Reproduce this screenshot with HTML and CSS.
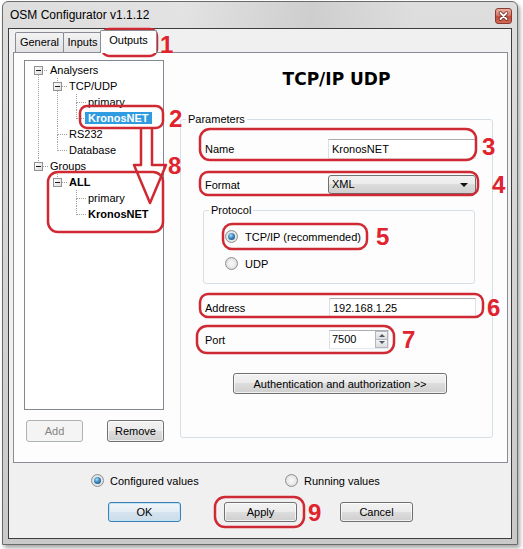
FILE: index.html
```html
<!DOCTYPE html>
<html>
<head>
	<meta charset="utf-8">
	<title>OSM Configurator v1.1.12</title>
	<link rel="stylesheet" href="styles.css">
</head>

<body>
	<div class="window">
		<div class="titlebar">
			<span class="title">OSM Configurator v1.1.12</span>
			<span class="close">
				<svg width="15" height="14" viewBox="0 0 15 14">
					<path d="M4.5 4L10.5 10M10.5 4L4.5 10" stroke="#6a2a22" stroke-width="3.4" stroke-linecap="round"/>
					<path d="M4.5 4L10.5 10M10.5 4L4.5 10" stroke="#fff" stroke-width="1.8" stroke-linecap="round"/>
				</svg>
			</span>
		</div>

		<div class="client">
			<div class="tabs">
				<div class="tab general">General</div>
				<div class="tab inputs">Inputs</div>
				<div class="tab active">Outputs</div>
			</div>

			<div class="panel">
				<div class="left">
					<ul class="tree">
						<li>
							<span class="node"><i class="toggle"></i>Analysers</span>
							<ul>
								<li>
									<span class="node"><i class="toggle"></i>TCP/UDP</span>
									<ul>
										<li><span class="node">primary</span></li>
										<li><span class="node"><b class="current">KronosNET</b></span></li>
									</ul>
								</li>
								<li><span class="node">RS232</span></li>
								<li><span class="node">Database</span></li>
							</ul>
						</li>
						<li>
							<span class="node"><i class="toggle"></i>Groups</span>
							<ul>
								<li>
									<span class="node"><i class="toggle"></i><b>ALL</b></span>
									<ul>
										<li><span class="node">primary</span></li>
										<li><span class="node"><b>KronosNET</b></span></li>
									</ul>
								</li>
							</ul>
						</li>
					</ul>
					<div class="tree-buttons">
						<button class="btn add" disabled>Add</button>
						<button class="btn remove">Remove</button>
					</div>
				</div>

				<div class="right">
					<h2>TCP/IP UDP</h2>
					<fieldset class="group params">
						<legend>Parameters</legend>
						<div class="rows">
							<div class="row">
								<span class="caption">Name</span>
								<div class="textbox">KronosNET</div>
							</div>
							<div class="row format">
								<span class="caption">Format</span>
								<div class="combo">XML<i class="arrow"></i></div>
							</div>
							<fieldset class="group protocol">
								<legend>Protocol</legend>
								<div class="radio-line"><span class="radio checked"></span>TCP/IP (recommended)</div>
								<div class="radio-line udp"><span class="radio"></span>UDP</div>
							</fieldset>
							<div class="row address">
								<span class="caption">Address</span>
								<div class="textbox">192.168.1.25</div>
							</div>
							<div class="row port">
								<span class="caption">Port</span>
								<div class="spin">
									<span class="spin-value">7500</span>
									<span class="spin-btns"><i class="up"></i><i class="down"></i></span>
								</div>
							</div>
							<button class="btn auth">Authentication and authorization &gt;&gt;</button>
						</div>
					</fieldset>
				</div>
			</div>

			<div class="mode">
				<label class="mode-item"><span class="radio checked"></span>Configured values</label>
				<label class="mode-item"><span class="radio"></span>Running values</label>
			</div>

			<div class="actions">
				<button class="btn default">OK</button>
				<button class="btn">Apply</button>
				<button class="btn">Cancel</button>
			</div>
		</div>
	</div>

	<!-- red hints drawn over the screenshot -->
	<svg class="marks" width="523" height="549" viewBox="0 0 523 549">
		<g fill="none" stroke="#cf2a33" stroke-width="2.5" stroke-linejoin="round">
			<rect x="102" y="29" width="55" height="27" rx="7"/>
			<rect x="80" y="106" width="83" height="22" rx="7"/>
			<rect x="48" y="172" width="115" height="60" rx="10"/>
			<path d="M141 129V165H134L150 203L166 165H152V129"/>
			<rect x="200" y="129" width="276" height="31" rx="10"/>
			<rect x="200" y="172" width="278" height="23" rx="8"/>
			<rect x="223" y="224" width="144" height="25" rx="9"/>
			<rect x="200" y="294" width="283" height="23" rx="8"/>
			<rect x="197" y="326" width="197" height="27" rx="10"/>
			<rect x="215" y="497" width="89" height="30" rx="10"/>
		</g>
		<g class="num">
			<text x="160" y="53">1</text>
			<text x="169" y="127">2</text>
			<text x="168" y="174">8</text>
			<text x="482" y="155">3</text>
			<text x="492" y="193">4</text>
			<text x="376" y="245">5</text>
			<text x="487" y="316">6</text>
			<text x="402" y="348">7</text>
			<text x="308" y="521">9</text>
		</g>
	</svg>
</body>
</html>
```

FILE: styles.css
```css
body {
	margin: 0;
	padding: 1px 0 0 2px;
	width: 523px;
	height: 549px;
	box-sizing: border-box;
	position: relative;
	overflow: hidden;
	background: #fff;
	font-family: "Liberation Sans", Arial, sans-serif;
	font-size: 11px;
	color: #000;
}

.window {
	width: 516px;
	height: 544px;
	box-sizing: border-box;
	display: flex;
	flex-direction: column;
	padding: 0 5px 5px;
	border: 1px solid #6b6b6b;
	border-radius: 6px 6px 0 0;
	background: linear-gradient(#dedede, #c9c9c9);
	box-shadow: 2px 3px 4px rgba(0, 0, 0, 0.35);
}

.titlebar {
	height: 26px;
	display: flex;
	align-items: flex-start;
	background: linear-gradient(90deg, rgba(255,255,255,0) 0%, rgba(255,255,255,0.15) 35%, rgba(0,0,0,0.07) 60%, rgba(255,255,255,0) 80%);
	margin: 0 -5px;
	padding: 0 5px;
}

.title {
	font-size: 12px;
	line-height: 14px;
	margin: 6px 0 0 2px;
}

.close {
	margin: 6px 0 0 auto;
	width: 17px;
	height: 16px;
	box-sizing: border-box;
	border: 1px solid #8b3a30;
	border-radius: 3px;
	background: linear-gradient(#eab0a4 0%, #d77767 45%, #c24a3a 55%, #d06a55 100%);
	display: flex;
	align-items: center;
	justify-content: center;
}

.client {
	flex: 1;
	display: flex;
	flex-direction: column;
	border: 1px solid #3d3d3d;
	background: #f0f0f0;
}

/* tabs */
.tabs {
	display: flex;
	align-items: flex-end;
	height: 22px;
	margin-top: 1px;
	padding-left: 6px;
}

.tab {
	height: 20px;
	box-sizing: border-box;
	border: 1px solid #898c95;
	border-bottom: 0;
	border-radius: 2px 2px 0 0;
	background: linear-gradient(#f3f3f3, #e1e1e1);
	line-height: 18px;
	text-align: center;
}

.tab.general {
	width: 49px;
}

.tab.inputs {
	width: 39px;
	margin-left: -1px;
}

.tab.active {
	position: relative;
	z-index: 2;
	width: 57px;
	height: 23px;
	margin: 0 0 -1px -2px;
	background: #fdfdfd;
}

.panel {
	height: 411px;
	box-sizing: border-box;
	margin: 0 3px 0 4px;
	padding: 7px 14px 0 10px;
	display: flex;
	gap: 16px;
	border: 1px solid #898c95;
	background: #fdfdfd;
}

/* tree */
.left {
	width: 140px;
	display: flex;
	flex-direction: column;
}

.tree {
	height: 350px;
	box-sizing: border-box;
	margin: 0;
	padding: 1px 0 0;
	list-style: none;
	border: 1px solid #828790;
	background: #fff;
}

.tree ul {
	list-style: none;
	margin: 0;
	padding-left: 19px;
}

.tree li {
	position: relative;
}

.tree li::before {
	content: "";
	position: absolute;
	left: 13px;
	top: 0;
	width: 9px;
	height: 8px;
	border-left: 1px dotted #a0a0a0;
	border-bottom: 1px dotted #a0a0a0;
}

.tree li:not(:last-child)::after {
	content: "";
	position: absolute;
	left: 13px;
	top: 8px;
	bottom: 0;
	border-left: 1px dotted #a0a0a0;
}

.tree > li:first-child::before {
	border-left: 0;
}

.node {
	display: block;
	position: relative;
	height: 16px;
	line-height: 16px;
	padding-left: 25px;
	white-space: nowrap;
}

.toggle {
	position: absolute;
	z-index: 1;
	left: 9px;
	top: 4px;
	width: 9px;
	height: 9px;
	box-sizing: border-box;
	border: 1px solid #919191;
	background: linear-gradient(135deg, #fff, #dcdcdc);
}

.toggle::after {
	content: "";
	position: absolute;
	left: 1px;
	top: 3px;
	width: 5px;
	height: 1px;
	background: #1a1a1a;
}

.current {
	display: inline-block;
	vertical-align: top;
	margin: 2px 0 0 -3px;
	padding: 0 3px;
	line-height: 12px;
	background: #2f9be0;
	color: #fff;
}

.tree-buttons {
	display: flex;
	margin-top: 10px;
}

.tree-buttons .add {
	margin-left: 2px;
}

.tree-buttons .remove {
	margin-left: auto;
}

/* buttons */
.btn {
	font: inherit;
	color: #000;
	width: 57px;
	height: 22px;
	padding: 0;
	border: 1px solid #707070;
	border-radius: 3px;
	background: linear-gradient(#f2f2f2 0%, #ebebeb 49%, #dddddd 50%, #cfcfcf 100%);
	box-shadow: inset 0 0 0 1px rgba(255, 255, 255, 0.7);
}

.btn:disabled {
	border-color: #adb2b5;
	background: #f4f4f4;
	color: #838383;
	box-shadow: none;
}

.btn.default {
	border-color: #3c7fb1;
	background: linear-gradient(#f1f6fa 0%, #e4edf4 49%, #d6e4ef 50%, #cbdce9 100%);
	box-shadow: inset 0 0 0 1px #bfe3f7;
}

/* right side */
.right {
	width: 313px;
	display: flex;
	flex-direction: column;
}

h2 {
	margin: 9px 0 0;
	font-family: "DejaVu Sans", Verdana, sans-serif;
	font-size: 17px;
	font-weight: bold;
	line-height: 20px;
	text-align: center;
}

.group {
	margin: 0;
	padding: 0;
	min-width: 0;
	box-sizing: border-box;
	border: 1px solid #d5dfe5;
	border-radius: 3px;
}

.group legend {
	margin-left: 5px;
	padding: 0 2px;
	line-height: 14px;
}

.params {
	margin-top: 23px;
	height: 326px;
}

.rows {
	padding: 13px 16px 0 24px;
}

.row {
	display: flex;
	align-items: center;
}

.caption {
	width: 123px;
	flex: none;
}

.textbox {
	flex: 1;
	height: 20px;
	box-sizing: border-box;
	padding-left: 3px;
	line-height: 18px;
	border: 1px solid;
	border-color: #abadb3 #e2e3ea #e3e9ef #dbdfe6;
	background: #fff;
}

.row.format {
	margin-top: 16px;
}

.combo {
	flex: 1;
	position: relative;
	height: 19px;
	box-sizing: border-box;
	padding-left: 3px;
	line-height: 17px;
	border: 1px solid #707070;
	border-radius: 3px;
	background: linear-gradient(#f2f2f2 0%, #ebebeb 49%, #dddddd 50%, #cfcfcf 100%);
}

.combo .arrow {
	position: absolute;
	right: 7px;
	top: 7px;
	border-left: 4px solid transparent;
	border-right: 4px solid transparent;
	border-top: 4px solid #111;
}

.protocol {
	width: 272px;
	height: 81px;
	margin: 9px 0 0 -2px;
	padding-top: 13px;
}

.radio-line {
	display: flex;
	align-items: center;
	gap: 7px;
	height: 13px;
	margin-left: 21px;
}

.radio-line.udp {
	margin-top: 14px;
}

.radio {
	position: relative;
	flex: none;
	width: 13px;
	height: 13px;
	box-sizing: border-box;
	border: 1px solid #8e8f8f;
	border-radius: 50%;
	background: radial-gradient(circle at 50% 50%, #fafafa 0%, #ececec 45%, #cfcfcf 100%);
}

.radio.checked::after {
	content: "";
	position: absolute;
	left: 2px;
	top: 2px;
	width: 7px;
	height: 7px;
	border-radius: 50%;
	background: radial-gradient(circle at 40% 35%, #a8e2ff 0%, #3b87bd 45%, #133f66 100%);
}

.row.address {
	margin-top: 14px;
}

.row.address .textbox {
	margin-left: 1px;
}

.row.port {
	margin-top: 12px;
}

.spin {
	display: flex;
	width: 60px;
	height: 19px;
	margin-left: 1px;
	box-sizing: border-box;
	border: 1px solid;
	border-color: #abadb3 #e2e3ea #e3e9ef #dbdfe6;
	background: #fff;
}

.spin-value {
	padding-left: 2px;
	line-height: 17px;
}

.spin-btns {
	margin-left: auto;
	width: 13px;
	display: flex;
	flex-direction: column;
}

.spin-btns i {
	flex: 1;
	position: relative;
	border: 1px solid #b4b8be;
	background: linear-gradient(#f4f4f4, #dcdcdc);
}

.spin-btns i + i {
	border-top: 0;
}

.spin-btns i::after {
	content: "";
	position: absolute;
	left: 3px;
	top: 2px;
	border-left: 3px solid transparent;
	border-right: 3px solid transparent;
}

.spin-btns .up::after {
	border-bottom: 3px solid #4d5a6a;
}

.spin-btns .down::after {
	top: 1px;
	border-top: 3px solid #4d5a6a;
}

.btn.auth {
	width: 214px;
	height: 21px;
	margin: 24px 0 0 28px;
}

/* bottom of the dialog */
.mode {
	display: flex;
	align-items: center;
	height: 13px;
	margin-top: 11px;
	padding-left: 82px;
}

.mode-item {
	display: flex;
	align-items: center;
	gap: 6px;
	width: 194px;
}

.actions {
	display: flex;
	gap: 43px;
	margin-top: 15px;
	padding-left: 99px;
}

.actions .btn {
	width: 73px;
	height: 20px;
}

.marks {
	position: absolute;
	left: 0;
	top: 0;
	pointer-events: none;
}

.num text {
	fill: #e0232d;
	font-family: "Liberation Sans", Arial, sans-serif;
	font-size: 24px;
	font-weight: bold;
}
```
